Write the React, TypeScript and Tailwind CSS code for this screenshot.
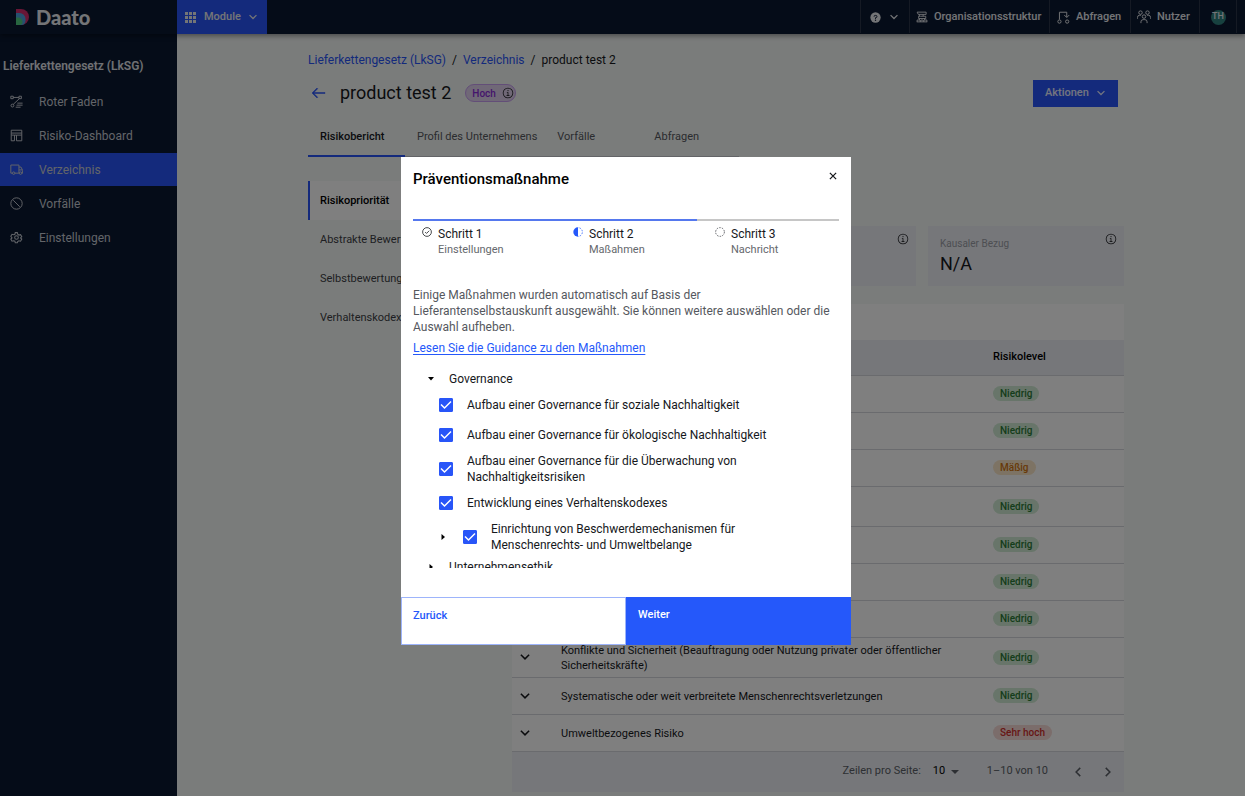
import clsx from "clsx";
import { FC, ReactNode, useState } from "react";

interface IconProps {
  className?: string;
}

const ChevronDown: FC<IconProps> = ({ className }) => (
  <svg viewBox="0 0 16 16" fill="none" stroke="currentColor" strokeWidth={2} className={className}>
    <path d="M2.5 5 8 10.500 13.500 5" />
  </svg>
);

const Info: FC<IconProps> = ({ className }) => (
  <svg viewBox="0 0 32 32" fill="currentColor" className={className}>
    <path d="M17 22v-8h-4v2h2v6h-3v2h8v-2zM16 8a1.5 1.5 0 1 0 1.5 1.5A1.5 1.5 0 0 0 16 8Z" />
    <path d="M16 30A14 14 0 1 1 30 16 14 14 0 0 1 16 30ZM16 4A12 12 0 1 0 28 16 12 12 0 0 0 16 4Z" />
  </svg>
);

const ArrowLeft: FC<IconProps> = ({ className }) => (
  <svg viewBox="0 0 32 32" fill="currentColor" className={className}>
    <path d="M14 26l1.4-1.4L7.8 17H30v-2H7.8l7.6-7.6L14 6 4 16z" stroke="currentColor" />
  </svg>
);

const Close: FC<IconProps> = ({ className }) => (
  <svg viewBox="0 0 16 16" stroke="currentColor" strokeWidth={2} className={className}>
    <path d="M3 3l10 10M13 3 3 13" />
  </svg>
);

const Apps: FC<IconProps> = ({ className }) => (
  <svg viewBox="0 0 11 11" fill="currentColor" className={className}>
    <path d="M0 0h3v3H0zM4 0h3v3H4zM8 0h3v3H8zM0 4h3v3H0zM4 4h3v3H4zM8 4h3v3H8zM0 8h3v3H0zM4 8h3v3H4zM8 8h3v3H8z" />
  </svg>
);

const Help: FC<IconProps> = ({ className }) => (
  <svg viewBox="0 0 32 32" className={className}>
    <circle cx="16" cy="16" r="15" fill="currentColor" />
    <path d="M12 13.5V13a3 3 0 0 1 3-3h2a3.2 3.2 0 0 1 0 6.5h-1V20" fill="none" stroke="#0b1830" strokeWidth={2.8} />
    <circle cx="16" cy="24" r="2" fill="#0b1830" />
  </svg>
);

const Structure: FC<IconProps> = ({ className }) => (
  <svg viewBox="0 0 32 32" fill="none" stroke="currentColor" strokeWidth={2.4} className={className}>
    <path d="M3 3h24v6H6zM9 9v5M12 14h14v6H7v-6h5M19 9v5M9 20v4M23 20v4M3 29v-5h8v5M13 29v-5h6v5M21 29v-5h8v5M2 29h28" />
  </svg>
);

const Requests: FC<IconProps> = ({ className }) => (
  <svg viewBox="0 0 32 32" fill="none" stroke="currentColor" strokeWidth={2.4} className={className}>
    <path d="M6 21V3h18v12M18 10l6 6 6-6" />
    <circle cx="6" cy="26" r="4" />
    <circle cx="25" cy="26" r="4" />
  </svg>
);

const UserGroup: FC<IconProps> = ({ className }) => (
  <svg viewBox="0 0 32 32" fill="none" stroke="currentColor" strokeWidth={2.2} className={className}>
    <circle cx="8" cy="6" r="4" />
    <circle cx="24" cy="6" r="4" />
    <circle cx="16" cy="15" r="4" />
    <path d="M1 20v-3a5 5 0 0 1 5-5h3M31 20v-3a5 5 0 0 0-5-5h-3M9 30v-3a5 5 0 0 1 5-5h4a5 5 0 0 1 5 5v3" />
  </svg>
);

const Flow: FC<IconProps> = ({ className }) => (
  <svg viewBox="0 0 32 32" fill="none" stroke="currentColor" strokeWidth={2.4} className={className}>
    <path d="M2 3h6v6H2zM8 6h14M22 3h6v6h-6zM23 9 8 23M18 20h13M16 25h15M14 30h12" />
    <circle cx="6" cy="26" r="3.500" />
  </svg>
);

const Dashboard: FC<IconProps> = ({ className }) => (
  <svg viewBox="0 0 32 32" fill="none" stroke="currentColor" strokeWidth={2.4} className={className}>
    <path d="M3 3h26v7H3zM3 15h8v14H3zM16 15h13v14H16zM3 10v5M29 10v5M11 15h5" />
  </svg>
);

const Truck: FC<IconProps> = ({ className }) => (
  <svg viewBox="0 0 32 32" fill="none" stroke="currentColor" strokeWidth={2.4} className={className}>
    <path d="M5 25H2V5h20v20H12M22 10h5l4 8v7h-2M22 17h8" />
    <circle cx="9" cy="25" r="3" />
    <circle cx="26" cy="25" r="3" />
  </svg>
);

const Blocked: FC<IconProps> = ({ className }) => (
  <svg viewBox="0 0 32 32" fill="none" stroke="currentColor" strokeWidth={2.4} className={className}>
    <circle cx="16" cy="16" r="14" />
    <path d="m8 8 16 16" />
  </svg>
);

const Gear: FC<IconProps> = ({ className }) => (
  <svg viewBox="0 0 32 32" fill="none" stroke="currentColor" strokeWidth={2.6} className={className}>
    <path d="M13 4h5l1 4 3 2 4-1 3 5-3 3 3 3-3 5-4-1-3 2-1 3h-5l-1-4-3-1-4 1-3-5 3-3-3-4 3-5 4 1 3-1z" />
    <circle cx="16" cy="16" r="4.500" />
  </svg>
);

const Logo: FC<IconProps> = ({ className }) => (
  <svg viewBox="0 0 14 16" className={className}>
    <path d="M0 0h5a8 8 0 0 1 8 8 8 8 0 0 1-8 8H0z" fill="#d02c6c" />
    <path d="M0 4h3.500A6 6 0 0 1 9.500 10v1.500c0 2.500-1.500 4.500-4 4.500H0z" fill="#4da3e0" />
    <path d="M0 8.500h2a4.500 4.500 0 0 1 4.500 4.500c0 1.500-.8 3-2.500 3H0z" fill="#50cd80" />
  </svg>
);

const MENU = [
  { label: "Roter Faden", icon: Flow },
  { label: "Risiko-Dashboard", icon: Dashboard },
  { label: "Verzeichnis", icon: Truck, active: true },
  { label: "Vorfälle", icon: Blocked },
  { label: "Einstellungen", icon: Gear },
];

const TABS = ["Risikobericht", "Profil des Unternehmens", "Vorfälle", "Abfragen"];

const SECTIONS = [
  "Risikopriorität",
  "Abstrakte Bewertung",
  "Selbstbewertung",
  "Verhaltenskodex",
];

const CARDS = [
  { label: "Schwere", value: "Hoch" },
  { label: "Einflussvermögen", value: "N/A" },
  { label: "Kausaler Bezug", value: "N/A" },
];

type Level = "Niedrig" | "Mäßig" | "Sehr hoch";

const LEVEL_STYLES: Record<Level, string> = {
  Niedrig: "bg-[#d0ebd4] text-[#2b7a36]",
  Mäßig: "bg-[#fbe7c8] text-[#cf7410]",
  "Sehr hoch": "bg-[#f6dad7] text-[#cf2f2b]",
};

const RISKS: { name: string; level: Level }[] = [
  { name: "Kinderarbeit", level: "Niedrig" },
  { name: "Zwangsarbeit und Sklaverei", level: "Niedrig" },
  { name: "Arbeitsschutz", level: "Mäßig" },
  {
    name: "Missachtung der Koalitionsfreiheit sowie der Vereinigungs- und\u00a0Kollektivverhandlungsfreiheit",
    level: "Niedrig",
  },
  { name: "Ungleichbehandlung", level: "Niedrig" },
  { name: "Vorenthalten eines Lohns", level: "Niedrig" },
  { name: "Widerrechtliche Zwangsräumung", level: "Niedrig" },
  {
    name: "Konflikte und Sicherheit (Beauftragung oder Nutzung privater oder öffentlicher Sicherheitskräfte)",
    level: "Niedrig",
  },
  {
    name: "Systematische oder weit verbreitete Menschenrechtsverletzungen",
    level: "Niedrig",
  },
  { name: "Umweltbezogenes Risiko", level: "Sehr hoch" },
];

const MEASURES = [
  { label: "Aufbau einer Governance für soziale Nachhaltigkeit" },
  { label: "Aufbau einer Governance für ökologische Nachhaltigkeit" },
  { label: "Aufbau einer Governance für die Überwachung von Nachhaltigkeitsrisiken" },
  { label: "Entwicklung eines Verhaltenskodexes" },
  {
    label: "Einrichtung von Beschwerdemechanismen für Menschenrechts- und Umweltbelange",
    nested: true,
  },
];

const HeaderItem: FC<{ className: string; children: ReactNode }> = ({
  className,
  children,
}) => (
  <button
    type="button"
    className={clsx(
      "flex h-[33px] items-center border-l border-[#2a3548] pt-px text-[11px] font-medium",
      className,
    )}
  >
    {children}
  </button>
);

const Header = () => (
  <header className="relative flex h-[34px] shrink-0 items-start bg-[#0b1830] text-[#e8eaee] shadow-[0_2px_5px_rgba(0,0,0,0.4)]">
    <a href="#" className="flex h-[33px] w-[177px] items-center gap-1.5 pl-4">
      <Logo className="h-4 w-3.5" />
      <span className="font-['Lato','Liberation_Sans',sans-serif] text-xl font-black">
        Daato
      </span>
    </a>
    <button
      type="button"
      className="flex h-[34px] w-[90px] items-center bg-[#2855f8] pl-2 text-left text-[11px] font-medium"
    >
      <Apps className="size-[11px]" />
      <span className="ml-2 w-[40px]">Module</span>
      <ChevronDown className="ml-1 size-2.5" />
    </button>
    <nav className="ml-auto flex">
      <HeaderItem className="w-[49px] gap-2 pl-[9px]">
        <Help className="size-[11px]" />
        <ChevronDown className="size-2.5" />
      </HeaderItem>
      <HeaderItem className="w-[140px] gap-1.5 pl-1.5">
        <Structure className="size-3" />
        Organisationsstruktur
      </HeaderItem>
      <HeaderItem className="w-[81px] gap-1.5 pl-[7px]">
        <Requests className="size-[13px]" />
        Abfragen
      </HeaderItem>
      <HeaderItem className="w-[69px] gap-1.5 pl-1.5">
        <UserGroup className="size-3.5" />
        Nutzer
      </HeaderItem>
      <HeaderItem className="w-[37px] justify-center">
        <span className="flex size-[15px] items-center justify-center rounded-full bg-[#2f827f] text-[9px]">
          TH
        </span>
      </HeaderItem>
      <span className="h-[33px] w-[9px] border-l border-[#2a3548]" />
    </nav>
  </header>
);

const Sidebar = () => (
  <aside className="w-[177px] shrink-0 bg-[#0a1830] text-[#c6cad2]">
    <h2 className="mt-[22px] pl-[3px] text-[12px] leading-5 font-semibold text-[#e0e3e8]">
      Lieferkettengesetz (LkSG)
    </h2>
    <ul className="mt-[9px] flex flex-col gap-px">
      {MENU.map(({ label, icon: Icon, active }) => (
        <li key={label}>
          <a
            href="#"
            className={clsx(
              "flex h-[33px] items-center gap-4 pl-2.5 text-[12px]",
              active && "bg-[#2855f8]",
            )}
          >
            <Icon className="size-[13px]" />
            {label}
          </a>
        </li>
      ))}
    </ul>
  </aside>
);

const RiskTable = () => (
  <div className="mt-[18px] bg-white pt-9">
    <table className="w-full table-fixed border-collapse text-left text-[11px] text-[#16181c]">
      <colgroup>
        <col className="w-[49px]" />
        <col />
        <col className="w-[143px]" />
      </colgroup>
      <thead>
        <tr className="h-[35px] border-b border-[#d5d7dc] bg-[#edeff5]">
          <th />
          <th className="font-medium">Risikobereich</th>
          <th className="pl-3 font-medium text-black">Risikolevel</th>
        </tr>
      </thead>
      <tbody>
        {RISKS.map(({ name, level }) => (
          <tr key={name} className="h-[37px] border-b border-[#d5d7dc]">
            <td className="pl-[7px]">
              <button type="button" aria-label={name} className="block">
                <ChevronDown className="size-3" />
              </button>
            </td>
            <td className="pt-[5px] pr-8 pb-1 leading-[15px]">{name}</td>
            <td className="pl-3">
              <span
                className={clsx(
                  "block w-fit rounded-full px-[7px] text-[10px] leading-[15px] font-medium",
                  LEVEL_STYLES[level],
                )}
              >
                {level}
              </span>
            </td>
          </tr>
        ))}
      </tbody>
    </table>
    <div className="flex h-10 items-center justify-end bg-[#edeff5] pr-2.5 text-[11px] text-[#5b5f66]">
      <label htmlFor="page-size">Zeilen pro Seite:</label>
      <div className="ml-3 grid w-[26px] items-center text-black">
        <select
          id="page-size"
          className="appearance-none bg-transparent [grid-area:1/1]"
          defaultValue="10"
        >
          <option>10</option>
          <option>25</option>
        </select>
        <svg
          viewBox="0 0 8 4"
          className="pointer-events-none h-1 w-2 justify-self-end fill-[#5b5f66] [grid-area:1/1]"
        >
          <path d="M0 0h8L4 4z" />
        </svg>
      </div>
      <span className="ml-[28px]">1–10 von 10</span>
      <button type="button" aria-label="Vorherige Seite" className="ml-6">
        <ChevronDown className="size-3 rotate-90" />
      </button>
      <button type="button" aria-label="Nächste Seite" className="ml-[18px]">
        <ChevronDown className="size-3 -rotate-90" />
      </button>
    </div>
  </div>
);

const Content = () => (
  <main className="min-w-0 grow pr-[121px] pl-[131px]">
    <nav className="mt-[17px] flex gap-1.5 text-[12px] leading-[18px]">
      <a href="#" className="text-[#2855f8]">
        Lieferkettengesetz (LkSG)
      </a>
      <span>/</span>
      <a href="#" className="text-[#2855f8]">
        Verzeichnis
      </a>
      <span>/</span>
      <span>product test 2</span>
    </nav>

    <div className="mt-2.5 mr-1.5 flex h-[28px] items-center">
      <button type="button" aria-label="Zurück" className="ml-[2px] text-[#2855f8]">
        <ArrowLeft className="size-4" />
      </button>
      <h1 className="ml-3.5 text-lg">product test 2</h1>
      <span className="ml-3.5 flex h-[18px] items-center gap-1.5 rounded-full border border-[#c79df0] bg-[#e0d0ee] pr-px pl-1.5 text-[10px] font-medium text-[#8a2ad8]">
        Hoch
        <Info className="size-3 text-[#16181c]" />
      </span>
      <button
        type="button"
        className="ml-auto flex h-[27px] w-[85px] items-center justify-between bg-[#2855f8] px-3 text-[11px] font-medium text-[#e6eaff]"
      >
        Aktionen
        <ChevronDown className="size-2.5" />
      </button>
    </div>

    <div className="mt-[10px] flex w-fit border-b border-[#c6c9ce] text-[11px] text-[#55585e]">
      {TABS.map((tab, i) => (
        <button
          key={tab}
          type="button"
          className={clsx(
            "-mb-px h-[40px] min-w-[97px] border-b-2 pt-[3px] pr-2 pl-3 text-left",
            i === 0
              ? "border-[#2855f8] font-medium text-[#16181c]"
              : "border-transparent",
          )}
        >
          {tab}
        </button>
      ))}
    </div>

    <div className="mt-6 flex gap-3">
      <ul className="w-48 shrink-0 text-[11px] text-[#3c3f45]">
        {SECTIONS.map((section, i) => (
          <li key={section}>
            <a
              href="#"
              className={clsx(
                "flex h-[39px] items-center border-l-2 pt-px pl-2.5",
                i === 0
                  ? "border-[#2855f8] bg-white font-medium text-black"
                  : "border-transparent",
              )}
            >
              {section}
            </a>
          </li>
        ))}
      </ul>
      <section className="min-w-0 grow">
        <h2 className="mb-[17px] h-7 text-lg">Risikopriorität</h2>
        <div className="grid grid-cols-3 gap-3">
          {CARDS.map(({ label, value }) => (
            <div key={label} className="flex h-[60px] justify-between bg-[#edeff5] pt-[7px] pr-[7px] pl-3">
              <div className="pt-1">
                <p className="text-[10px] leading-[14px] text-[#9a9da5]">{label}</p>
                <p className="text-lg leading-[26px]">{value}</p>
              </div>
              <Info className="size-3" />
            </div>
          ))}
        </div>
        <RiskTable />
      </section>
    </div>
  </main>
);

const Caret: FC<{ open?: boolean }> = ({ open }) => (
  <svg viewBox="0 0 8 8" className="size-2 shrink-0">
    <path d={open ? "M1 2h6L4 5.500z" : "M2.500 1v6L6 4z"} />
  </svg>
);

const Measure: FC<{ label: string; nested?: boolean }> = ({ label, nested }) => {
  const [checked, setChecked] = useState(true);

  return (
    <li className="flex min-h-[30px] items-center py-[3px] pr-8 pl-[26px]">
      {nested && (
        <button type="button" aria-label="Aufklappen" className="mr-4">
          <Caret />
        </button>
      )}
      <label className="flex items-center gap-3.5">
        <span className="grid size-3.5 shrink-0">
          <input
            type="checkbox"
            checked={checked}
            onChange={() => setChecked(!checked)}
            className="size-3.5 appearance-none rounded-[1px] border border-[#2855f8] checked:bg-[#2855f8] [grid-area:1/1]"
          />
          <svg
            viewBox="0 0 14 14"
            className="pointer-events-none size-3.5 fill-none stroke-white stroke-[1.500] [grid-area:1/1]"
          >
            <path d="m2 6.500 3.500 3.500L12 3.500" />
          </svg>
        </span>
        {label}
      </label>
    </li>
  );
};

const Step: FC<{
  title: string;
  label: string;
  className: string;
  children: ReactNode;
}> = ({ title, label, className, children }) => (
  <li className={clsx("flex gap-1.5 border-t-2 pt-[5px]", className)}>
    <svg viewBox="0 0 32 32" className="mt-px size-2.5 shrink-0">
      {children}
    </svg>
    <div>
      <p className="text-[12px] leading-4">{title}</p>
      <p className="text-[11px] leading-4 text-[#65686d]">{label}</p>
    </div>
  </li>
);

const Modal = () => (
  <div className="fixed inset-0 flex items-center justify-center bg-black/50 pt-[6px] pl-[7px]">
    <div
      role="dialog"
      aria-modal="true"
      aria-labelledby="modal-title"
      className="w-[450px] bg-white text-[#16181c]"
    >
      <div className="flex justify-between px-3 pt-3">
        <h2 id="modal-title" className="text-[15px] leading-5 font-medium text-black">
          Präventionsmaßnahme
        </h2>
        <button type="button" aria-label="Schließen" className="mt-[2px] mr-px h-2.5">
          <Close className="size-2.5" />
        </button>
      </div>

      <div className="px-3 pt-[30px]">
        <ol className="grid grid-cols-3">
          <Step title="Schritt 1" label="Einstellungen" className="border-[#5578ee] pl-[9px]">
            <circle cx="16" cy="16" r="14" fill="none" stroke="#16181c" strokeWidth={2.5} />
            <path d="m10 16 4.500 4.500L23 12" fill="none" stroke="#16181c" strokeWidth={2.5} />
          </Step>
          <Step title="Schritt 2" label="Maßahmen" className="border-[#5578ee] pl-[18px]">
            <path d="M16 1a15 15 0 0 0 0 30z" fill="#2558fa" />
            <path
              d="M16 2a14 14 0 0 1 0 28"
              fill="none"
              stroke="#2558fa"
              strokeWidth={2.5}
              strokeDasharray="5 4"
              strokeDashoffset={-5}
            />
          </Step>
          <Step title="Schritt 3" label="Nachricht" className="border-[#c6c6c6] pl-[18px]">
            <circle
              cx="16"
              cy="16"
              r="14"
              fill="none"
              stroke="#3c3f45"
              strokeWidth={2.5}
              strokeDasharray="5 3.800"
            />
          </Step>
        </ol>
      </div>

      <div className="mt-[29px] px-3 text-[12px] leading-4">
        <p className="text-[#55585e]">
          Einige Maßnahmen wurden automatisch auf Basis der
          Lieferantenselbstauskunft ausgewählt. Sie können weitere auswählen oder
          die Auswahl aufheben.
        </p>
        <a href="#" className="mt-[5px] inline-block text-[#2558fa] underline underline-offset-2">
          Lesen Sie die Guidance zu den Maßnahmen
        </a>
      </div>

      <div className="mx-3 mt-3 h-[200px] overflow-hidden text-[12px] leading-4">
        <div className="flex h-[22px] items-center gap-3.5 pl-3.5">
          <Caret open />
          Governance
        </div>
        <ul>
          {MEASURES.map((measure) => (
            <Measure key={measure.label} {...measure} />
          ))}
        </ul>
        <div className="flex h-[22px] items-center gap-3.5 pl-3.5">
          <Caret />
          Unternehmensethik
        </div>
      </div>

      <div className="mt-[29px] flex h-12 text-[11px] font-medium">
        <button
          type="button"
          className="flex flex-1 items-start border border-[#9db4fb] px-[11px] pt-2.5 text-[#2558fa]"
        >
          Zurück
        </button>
        <button
          type="button"
          className="flex flex-1 items-start bg-[#2558fa] px-3 pt-2.5 text-white"
        >
          Weiter
        </button>
      </div>
    </div>
  </div>
);

export default function App() {
  return (
    <div className="flex min-h-screen flex-col bg-[#f5f8f7] font-['Roboto','Liberation_Sans',sans-serif] text-[#16181c]">
      <Header />
      <div className="flex grow">
        <Sidebar />
        <Content />
      </div>
      <Modal />
    </div>
  );
}
